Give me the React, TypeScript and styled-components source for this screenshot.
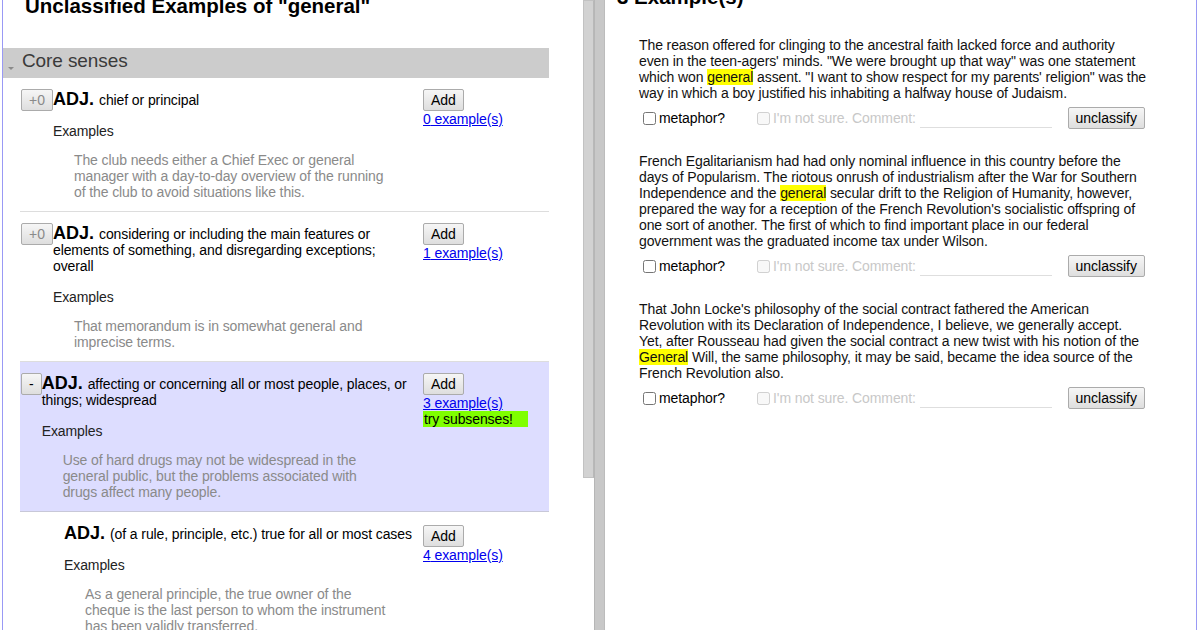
import React from 'react';
import styled, { createGlobalStyle } from 'styled-components';

const GlobalStyle = createGlobalStyle`
    html, body {
        margin: 0;
        padding: 0;
        background: #fff;
        overflow: hidden;
    }
    body {
        font-family: "Liberation Sans", Arial, sans-serif;
        font-size: 14px;
        letter-spacing: -0.1px;
        color: #000;
    }
`;

const Frame = styled.div`
    display: flex;
    width: 1195px;
    height: 630px;
    margin-left: 2px;
    box-sizing: border-box;
    border-left: 1px solid #9999f5;
    border-right: 1px solid #9999f5;
    overflow: hidden;
`;

const LeftPane = styled.div`
    flex: 0 0 580px;
    overflow: hidden;
`;

const LeftInner = styled.div`
    width: 546px;
`;

const PageTitle = styled.h1<{ $top: number; $bottom: number }>`
    margin: ${p => p.$top}px 0 ${p => p.$bottom}px 0;
    font-size: 20.5px;
    line-height: 24px;
    font-weight: bold;
    letter-spacing: 0;
    color: #000;
    white-space: nowrap;
`;

const LeftTitle = styled(PageTitle)`
    padding-left: 22px;
`;

const SectionHeader = styled.div`
    display: flex;
    align-items: flex-start;
    height: 30px;
    box-sizing: border-box;
    padding-top: 2px;
    background: #cccccc;
`;

const Caret = styled.span`
    flex: none;
    width: 0;
    height: 0;
    margin: 17px 8px 0 5px;
    border-left: 3px solid transparent;
    border-right: 3px solid transparent;
    border-top: 3px solid #8a8a8a;
`;

const SectionTitle = styled.span`
    font-size: 19px;
    line-height: 22px;
    color: #3a3a3a;
`;

const SenseList = styled.div`
    margin-left: 17px;
`;

const Sense = styled.div<{ $active?: boolean; $sub?: boolean }>`
    display: grid;
    grid-template-columns: 403px 1fr;
    padding: ${p => (p.$sub ? 13 : 11)}px 0 11px;
    background: ${p => (p.$active ? '#ddddff' : 'transparent')};
    border-bottom: 1px solid ${p => (p.$active ? '#c8c8d8' : '#dddddd')};
`;

const SenseMain = styled.div<{ $sub?: boolean }>`
    display: flex;
    align-items: baseline;
    padding-left: ${p => (p.$sub ? 44 : 1)}px;
    padding-right: 5px;
`;

const GrayButton = styled.button<{ $muted?: boolean }>`
    flex: none;
    height: 22px;
    box-sizing: border-box;
    padding: 0 7px;
    margin: 0;
    border: 1px solid #ababab;
    border-radius: 2px;
    background: linear-gradient(#f6f6f6, #dedede);
    font-family: "Liberation Sans", Arial, sans-serif;
    font-size: 14px;
    line-height: 16px;
    color: ${p => (p.$muted ? '#8a8a8a' : '#000')};
`;

const SenseBody = styled.div`
    flex: 1;
    min-width: 0;
    line-height: 16px;
`;

const Pos = styled.b`
    font-size: 18px;
    letter-spacing: 0;
`;

const ExamplesLabel = styled.div`
    margin-top: 15px;
    color: #222;
`;

const ExampleText = styled.div`
    margin: 13px 0 0 21px;
    width: 312px;
    color: #8a8a8a;
`;

const SenseSide = styled.div`
    display: flex;
    flex-direction: column;
    align-items: flex-start;
    line-height: 16px;
`;

const CountLink = styled.a`
    color: #0000ee;
    text-decoration: underline;
`;

const Hint = styled.span`
    width: 105px;
    box-sizing: border-box;
    padding-left: 1px;
    background: #7fff00;
    color: #000;
`;

const ScrollTrack = styled.div`
    flex: 0 0 11px;
    display: flex;
    flex-direction: column;
`;

const ScrollThumb = styled.div`
    height: 478px;
    box-sizing: border-box;
    background: #d2d2d2;
    border: 1px solid #c2c2c2;
    border-right-color: #b8b8b8;
`;

const Splitter = styled.div`
    flex: 0 0 11px;
    box-sizing: border-box;
    background: #c8c8c8;
    border-left: 1px solid #b6b6b6;
    border-right: 1px solid #bcbcbc;
`;

const RightPane = styled.div`
    flex: 1;
    min-width: 0;
    overflow: hidden;
    padding-left: 12px;
`;

const ExampleList = styled.div`
    margin-left: 22px;
    width: 508px;
`;

const ExampleItem = styled.div`
    margin-bottom: 24px;
`;

const Passage = styled.p`
    margin: 0 0 6px;
    line-height: 16px;
    color: #111;
`;

const Mark = styled.span`
    background: #ffff00;
`;

const ClassifyRow = styled.div`
    display: flex;
    align-items: center;
    width: 506px;
    height: 22px;
`;

const Check = styled.label<{ $disabled?: boolean; $gap?: number }>`
    display: inline-flex;
    align-items: center;
    margin-left: ${p => p.$gap ?? 0}px;
    color: ${p => (p.$disabled ? '#c8c8c8' : '#000')};
    white-space: nowrap;

    input {
        margin: 0 3px 0 4px;
        width: 13px;
        height: 13px;
    }
`;

const CommentInput = styled.input`
    width: 132px;
    height: 20px;
    box-sizing: border-box;
    margin: 0 0 0 4px;
    padding: 0 2px;
    border: 0;
    border-bottom: 1px solid #dedede;
    background: transparent;
    font-family: "Liberation Sans", Arial, sans-serif;
    font-size: 14px;
`;

const UnclassifyButton = styled(GrayButton)`
    margin-left: auto;
`;

interface SenseData {
    vote?: string;
    muted?: boolean;
    sub?: boolean;
    active?: boolean;
    definition: string;
    example: string;
    count: number;
    hint?: boolean;
}

const senses: SenseData[] = [
    {
        vote: '+0',
        muted: true,
        definition: 'chief or principal',
        example: 'The club needs either a Chief Exec or general manager with a day-to-day overview of the running of the club to avoid situations like this.',
        count: 0,
    },
    {
        vote: '+0',
        muted: true,
        definition: 'considering or including the main features or elements of something, and disregarding exceptions; overall',
        example: 'That memorandum is in somewhat general and imprecise terms.',
        count: 1,
    },
    {
        vote: '-',
        active: true,
        definition: 'affecting or concerning all or most people, places, or things; widespread',
        example: 'Use of hard drugs may not be widespread in the general public, but the problems associated with drugs affect many people.',
        count: 3,
        hint: true,
    },
    {
        sub: true,
        definition: '(of a rule, principle, etc.) true for all or most cases',
        example: 'As a general principle, the true owner of the cheque is the last person to whom the instrument has been validly transferred.',
        count: 4,
    },
];

const passages: [string, string, string][] = [
    [
        'The reason offered for clinging to the ancestral faith lacked force and authority even in the teen-agers\' minds. "We were brought up that way" was one statement which won ',
        'general',
        ' assent. "I want to show respect for my parents\' religion" was the way in which a boy justified his inhabiting a halfway house of Judaism.',
    ],
    [
        'French Egalitarianism had had only nominal influence in this country before the days of Popularism. The riotous onrush of industrialism after the War for Southern Independence and the ',
        'general',
        ' secular drift to the Religion of Humanity, however, prepared the way for a reception of the French Revolution\'s socialistic offspring of one sort of another. The first of which to find important place in our federal government was the graduated income tax under Wilson.',
    ],
    [
        'That John Locke\'s philosophy of the social contract fathered the American Revolution with its Declaration of Independence, I believe, we generally accept. Yet, after Rousseau had given the social contract a new twist with his notion of the ',
        'General',
        ' Will, the same philosophy, it may be said, became the idea source of the French Revolution also.',
    ],
];

function SenseRow({ sense }: { sense: SenseData }) {
    return (
        <Sense $active={sense.active} $sub={sense.sub}>
            <SenseMain $sub={sense.sub}>
                {sense.vote && <GrayButton $muted={sense.muted}>{sense.vote}</GrayButton>}
                <SenseBody>
                    <Pos>ADJ. </Pos>
                    {sense.definition}
                    <ExamplesLabel>Examples</ExamplesLabel>
                    <ExampleText>{sense.example}</ExampleText>
                </SenseBody>
            </SenseMain>
            <SenseSide>
                <GrayButton>Add</GrayButton>
                <CountLink href="#">{sense.count} example(s)</CountLink>
                {sense.hint && <Hint>try subsenses!</Hint>}
            </SenseSide>
        </Sense>
    );
}

export default function App() {
    return (
        <>
            <GlobalStyle />
            <Frame>
                <LeftPane>
                    <LeftInner>
                        <LeftTitle $top={-6} $bottom={30}>Unclassified Examples of "general"</LeftTitle>
                        <SectionHeader>
                            <Caret />
                            <SectionTitle>Core senses</SectionTitle>
                        </SectionHeader>
                        <SenseList>
                            {senses.map((s, i) => (
                                <SenseRow key={i} sense={s} />
                            ))}
                        </SenseList>
                    </LeftInner>
                </LeftPane>
                <ScrollTrack>
                    <ScrollThumb />
                </ScrollTrack>
                <Splitter />
                <RightPane>
                    <PageTitle $top={-15} $bottom={28}>3 Example(s)</PageTitle>
                    <ExampleList>
                        {passages.map(([before, word, after], i) => (
                            <ExampleItem key={i}>
                                <Passage>
                                    {before}
                                    <Mark>{word}</Mark>
                                    {after}
                                </Passage>
                                <ClassifyRow>
                                    <Check>
                                        <input type="checkbox" />
                                        metaphor?
                                    </Check>
                                    <Check $disabled $gap={28}>
                                        <input type="checkbox" disabled />
                                        I'm not sure. Comment:
                                    </Check>
                                    <CommentInput type="text" />
                                    <UnclassifyButton>unclassify</UnclassifyButton>
                                </ClassifyRow>
                            </ExampleItem>
                        ))}
                    </ExampleList>
                </RightPane>
            </Frame>
        </>
    );
}
